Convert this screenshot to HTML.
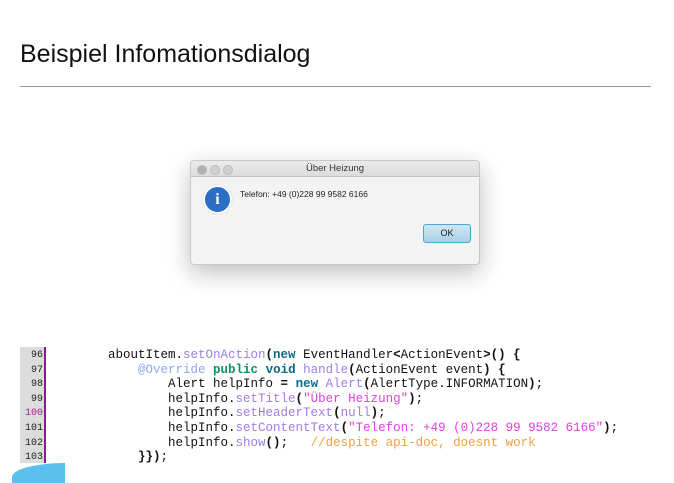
<!DOCTYPE html>
<html><head><meta charset="utf-8"><style>
body{margin:0;width:674px;height:473px;overflow:hidden;background:#fff;position:relative;font-family:"Liberation Sans",sans-serif}
h1{position:absolute;left:20px;top:40px;margin:0;font-size:25px;font-weight:normal;color:#111}
.hr{position:absolute;left:20px;top:86px;width:631px;height:1px;background:#999}
.dlg{position:absolute;left:190px;top:160px;width:288px;height:103px;background:#f3f3f3;border:1px solid #c8c8c8;border-radius:4px;box-shadow:0 8px 24px rgba(0,0,0,.25);overflow:hidden}
.tb{height:15px;background:linear-gradient(#ececec,#dcdcdc);border-bottom:1px solid #c4c4c4;text-align:center;font-size:9.5px;line-height:15px;color:#333}
.dot{position:absolute;top:4px;width:8px;height:8px;border-radius:50%;background:#d0d0d0;border:0.5px solid #bbb}
.ic{position:absolute;left:12px;top:24px;width:25px;height:25px;border-radius:50%;background:#2a6fc4;border:2px solid #fff;box-shadow:0 0 1px #999;color:#fff;text-align:center;font:bold 16px/25px "Liberation Serif",serif}
.msg{position:absolute;left:49px;top:28px;font-size:8.5px;color:#222}
.ok{position:absolute;left:232px;top:63px;width:46px;height:17px;border:1px solid #4aa7d6;border-radius:3px;background:linear-gradient(#cfe6f3,#a9d0e8);font-size:9px;line-height:17px;text-align:center;color:#222}
.gut{position:absolute;left:20px;top:347px;width:24px;height:116px;background:#dcdcdc;border-right:2px solid #8b1a8b}
.code{position:absolute;left:0;top:348px;font-family:"Liberation Mono",monospace;font-size:12.5px;color:#111}
.code div{height:14.6px;line-height:14.6px;white-space:pre;overflow:visible}
.n{display:inline-block;width:43px;text-align:right;font-size:10px;line-height:15.5px;color:#222;margin-right:65px;vertical-align:top}
.k{color:#0a6a8a;font-weight:bold}.g{color:#109060;font-weight:bold}.m{color:#9c7fe6}.s{color:#e040e0}.c{color:#f0a040}.a{color:#8fa8f0}
.blob{position:absolute;left:12px;top:463px;width:53px;height:20px;background:#5cc0ee;border-radius:53px 0 0 0/14px 0 0 0}
</style></head><body>
<h1>Beispiel Infomationsdialog</h1>
<div class="hr"></div>
<div class="dlg">
<div class="tb">Über Heizung</div>
<div class="dot" style="left:6px;background:#b0b0b0"></div><div class="dot" style="left:19px"></div><div class="dot" style="left:32px"></div>
<div class="ic">i</div>
<div class="msg">Telefon: +49 (0)228 99 9582 6166</div>
<div class="ok">OK</div>
</div>
<div class="gut"></div>
<div class="code">
<div><span class="n">96</span>aboutItem.<span class="m">setOnAction</span><b>(</b><span class="k">new</span> EventHandler<b>&lt;</b>ActionEvent<b>&gt;() {</b></div>
<div><span class="n">97</span>    <span class="a">@Override</span> <span class="g">public</span> <span class="k">void</span> <span class="m">handle</span><b>(</b>ActionEvent event<b>) {</b></div>
<div><span class="n">98</span>        Alert helpInfo <b>=</b> <span class="k">new</span> <span class="m">Alert</span><b>(</b>AlertType.INFORMATION<b>)</b>;</div>
<div><span class="n">99</span>        helpInfo.<span class="m">setTitle</span><b>(</b><span class="s">"Über Heizung"</span><b>)</b>;</div>
<div><span class="n" style="color:#a0208a">100</span>        helpInfo.<span class="m">setHeaderText</span><b>(</b><span class="m">null</span><b>)</b>;</div>
<div><span class="n">101</span>        helpInfo.<span class="m">setContentText</span><b>(</b><span class="s">"Telefon: +49 (0)228 99 9582 6166"</span><b>)</b>;</div>
<div><span class="n">102</span>        helpInfo.<span class="m">show</span><b>()</b>;   <span class="c">//despite api-doc, doesnt work</span></div>
<div><span class="n">103</span>    <b>}})</b>;</div>
</div>
<div class="blob"></div>
</body></html>
